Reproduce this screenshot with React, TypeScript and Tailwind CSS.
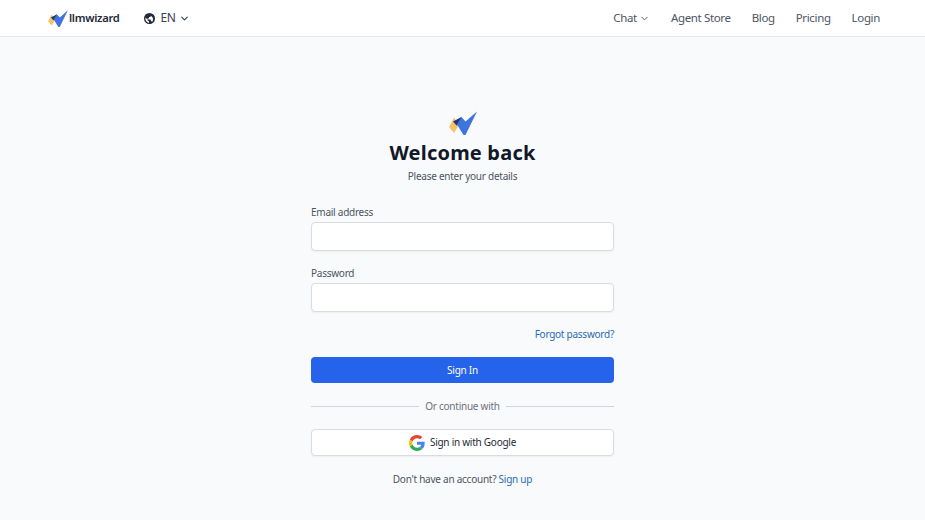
import React from "react";
import { ChevronDown } from "lucide-react";

function Logo({ className }: { className: string }) {
  return (
    <svg viewBox="0 0 28 24" className={className}>
      <path d="M5 6.500 L0 16 L5 22 L10 14 Z" fill="#f5c469" />
      <path d="M4 10.500 L12.500 6 L11.500 13 L7.500 14.500 Z" fill="#1e3a7a" />
      <path d="M8 13.500 L12.500 6 L16.500 10.500 L28 0.500 L16.500 24 L14.500 24 Z" fill="#3f73e0" />
    </svg>
  );
}

function GoogleIcon() {
  return (
    <svg viewBox="0 0 48 48" className="w-[16px] h-[16px]">
      <path fill="#EA4335" d="M24 9.500c3.500 0 6.700 1.200 9.200 3.600l6.900-6.900C35.900 2.400 30.500 0 24 0 14.600 0 6.500 5.400 2.600 13.200l8 6.200C12.500 13.700 17.800 9.500 24 9.500z" />
      <path fill="#4285F4" d="M47 24.500c0-1.600-.1-3.100-.4-4.500H24v9h12.900c-.6 3-2.200 5.500-4.800 7.200l7.700 6C44.300 38.500 47 32.100 47 24.500z" />
      <path fill="#FBBC05" d="M10.600 28.600C10.100 27.100 9.800 25.600 9.800 24s.3-3.100.8-4.600l-8-6.200C.9 16.500 0 20.100 0 24s.9 7.500 2.600 10.800l8-6.200z" />
      <path fill="#34A853" d="M24 48c6.500 0 11.900-2.100 15.800-5.800l-7.700-6c-2.100 1.400-4.900 2.300-8.100 2.300-6.200 0-11.500-4.200-13.400-9.900l-8 6.200C6.500 42.600 14.600 48 24 48z" />
    </svg>
  );
}

function GlobeIcon() {
  return (
    <svg viewBox="0 0 24 24" className="w-[11px] h-[11px]" fill="#1f2937">
      <path d="M12 0a12 12 0 1 0 0 24 12 12 0 0 0 0-24Zm-1 21.900A10 10 0 0 1 3.200 9.900L8 14.700v1.100c0 1.100.9 2 2 2h1v4.100Zm6.900-2.500c-.3-.8-1-1.400-1.900-1.400h-1v-3c0-.6-.4-1-1-1H8v-2h2c.6 0 1-.4 1-1V8.500h2c1.100 0 2-.9 2-2v-.4a10 10 0 0 1 2.900 13.300Z" />
    </svg>
  );
}

export default function App() {
  return (
    <div className="h-[520px] overflow-hidden bg-[#f9fafb] font-['Noto_Sans',sans-serif]">
      <header className="h-[37px] bg-white border-b border-[#e5e7eb] flex items-center justify-between pl-[48px] pr-[45px]">
        <div className="flex items-center">
          <div className="flex items-center gap-[1px]">
            <Logo className="w-[20px] h-[17px]" />
            <span className="text-[11.200px] tracking-[-0.3px] font-semibold text-[#1f2937] leading-none">llmwizard</span>
          </div>
          <div className="flex items-center ml-[25px] text-[12px] tracking-[-0.4px] text-[#374151]">
            <GlobeIcon />
            <span className="ml-[5px]">EN</span>
            <ChevronDown className="w-[11px] h-[11px] ml-[4px]" strokeWidth={2.500} />
          </div>
        </div>
        <nav className="flex items-center gap-[21px] text-[11.500px] tracking-[-0.35px] text-[#4b5563]">
          <span className="flex items-center gap-[2px]">
            Chat
            <ChevronDown className="w-[11px] h-[11px]" strokeWidth={2} />
          </span>
          <span>Agent Store</span>
          <span>Blog</span>
          <span>Pricing</span>
          <span>Login</span>
        </nav>
      </header>
      <main className="flex flex-col items-center pt-[74px]">
        <Logo className="w-[28px] h-[24px]" />
        <h1 className="mt-[4px] text-[20px] leading-[28px] font-bold text-[#111827] tracking-[0.2px]">Welcome back</h1>
        <p className="mt-[1px] text-[10px] tracking-[-0.25px] leading-[16px] text-[#4b5563]">Please enter your details</p>
        <form className="w-[303px] mt-[20px] flex flex-col">
          <label className="text-[10px] tracking-[-0.25px] leading-[16px] text-[#4b5563]">Email address</label>
          <input className="mt-[2px] h-[29px] bg-white border border-[#d9dce1] rounded-[4px] shadow-xs" />
          <label className="mt-[14px] text-[10px] tracking-[-0.25px] leading-[16px] text-[#4b5563]">Password</label>
          <input className="mt-[2px] h-[29px] bg-white border border-[#d9dce1] rounded-[4px] shadow-xs" />
          <a className="self-end mt-[14px] text-[10px] tracking-[-0.25px] leading-[16px] text-[#2b6cb0]">Forgot password?</a>
          <button type="button" className="mt-[15px] h-[26px] bg-[#2563eb] rounded-[4px] text-white text-[10px] tracking-[-0.25px]">Sign In</button>
          <div className="mt-[15px] flex items-center gap-[6px] text-[10px] tracking-[-0.25px] leading-[16px] text-[#6b7280]">
            <div className="flex-1 h-px bg-[#d1d5db]" />
            <span>Or continue with</span>
            <div className="flex-1 h-px bg-[#d1d5db]" />
          </div>
          <button type="button" className="mt-[15px] h-[27px] bg-white border border-[#d9dce1] rounded-[4px] shadow-xs flex items-center justify-center gap-[5px] text-[10px] tracking-[-0.25px] text-[#1f2937]">
            <GoogleIcon />
            Sign in with Google
          </button>
          <p className="mt-[15px] text-center text-[10px] tracking-[-0.25px] leading-[16px] text-[#4b5563]">
            Don't have an account? <a className="text-[#2b6cb0]">Sign up</a>
          </p>
        </form>
      </main>
    </div>
  );
}
